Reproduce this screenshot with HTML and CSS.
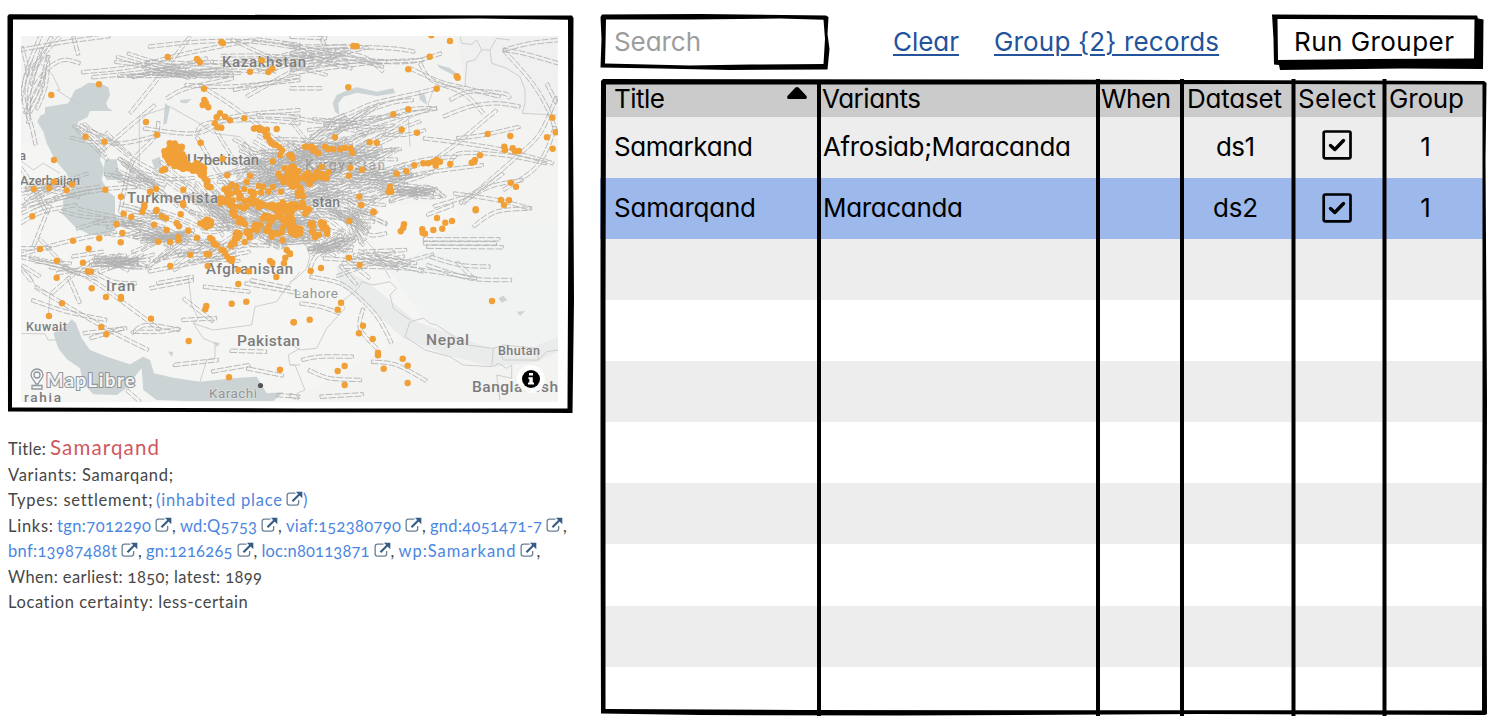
FILE: index.html
```html
<!DOCTYPE html>
<html lang="en">
<head>
<meta charset="utf-8">
<title>Grouper</title>
<link rel="stylesheet" href="styles.css">
</head>
<body>
<svg class="defs" width="0" height="0">
  <symbol id="ext" viewBox="0 0 18 17">
    <path d="M10 2.2H3.6Q1.2 2.2 1.2 4.6V12.6Q1.2 15 3.6 15H11Q13.4 15 13.4 12.6V9.5" fill="none" stroke="#6a8097" stroke-width="1.4"/>
    <path d="M6.8 10.8 14.5 3.2" stroke="#365c86" stroke-width="2.3"/>
    <path d="M10.5 .8H17.3V7.6Z" fill="#365c86"/>
  </symbol>
  <symbol id="check" viewBox="0 0 30 30">
    <path d="M3.5 1.5H27Q28.5 1.5 28.5 3V26.5Q28.5 28.3 27 28.3H3.5Q1.7 28.3 1.7 26.5V3Q1.7 1.5 3.5 1.5Z" fill="none" stroke="#000" stroke-width="2.7"/>
    <path d="M8.5 15.5 12.8 19.5 21.5 10.5" fill="none" stroke="#000" stroke-width="3.4" stroke-linecap="round" stroke-linejoin="round"/>
  </symbol>
</svg>
<main class="page">
  <section class="side">
    <div class="mapbox">
      <svg class="map" viewBox="21 36 537 366">
        <rect x="21" y="36" width="537" height="366" fill="#f3f3f2"/>
        <g id="land"></g>
        <g id="tracks"></g>
        <g class="places">
          <text x="222" y="67" textLength="84" font-size="15">Kazakhstan</text>
          <text x="187" y="165" textLength="72" font-size="15">Uzbekistan</text>
          <text x="127" y="203" textLength="91" font-size="15">Turkmenista</text>
          <text x="305" y="170" textLength="80" font-size="14" opacity=".5">Kyrgyzstan</text>
          <text x="312" y="207" textLength="28" font-size="14">stan</text>
          <text x="20" y="185" textLength="60" font-size="13">Azerbaijan</text>
          <text x="19" y="160" font-size="13">a</text>
          <text x="206" y="274" textLength="87" font-size="15">Afghanistan</text>
          <text x="106" y="291" textLength="29" font-size="15">Iran</text>
          <text x="294" y="298" textLength="44" font-size="13.500" class="city">Lahore</text>
          <text x="26" y="331" textLength="41" font-size="12.500">Kuwait</text>
          <text x="237" y="346" textLength="63" font-size="15.500">Pakistan</text>
          <text x="426" y="345" textLength="43" font-size="15.500">Nepal</text>
          <text x="498" y="355" textLength="42" font-size="12.500">Bhutan</text>
          <text x="472" y="392" textLength="86" font-size="15.500">Bangladesh</text>
          <text x="209" y="398" textLength="48" font-size="13.500" class="city">Karachi</text>
          <text x="24" y="402" textLength="37" font-size="13.500">rahia</text>
        </g>
        <g id="dots" fill="#f0a037"></g>
        <circle cx="260.500" cy="385.500" r="2.600" fill="#555"/>
        <g fill="#f6f6f6" stroke="#8f979c" stroke-width="1.300">
          <path d="M37 369a6 6 0 0 1 6 6c0 3-3 5-5 9h-2c-2-4-5-6-5-9a6 6 0 0 1 6-6Z"/>
          <circle cx="37" cy="375" r="3"/>
          <path d="M32 385.500h10v3.500h-10Z"/>
        </g>
        <text class="logo" x="46" y="387" textLength="89">MapLibre</text>
        <circle cx="531" cy="379" r="14" fill="#fff" opacity=".93"/>
        <circle cx="531" cy="379" r="9" fill="#000"/>
        <path d="M529 373h4v2.600h-4ZM528.400 377.200h4.400v5.400h1.200v1.800h-6v-1.800h1.300v-3.500h-.9Z" fill="#fff"/>
      </svg>
      <svg class="frame" viewBox="0 0 574 414">
        <path fill-rule="evenodd" d="M9 14.200 300 15 572 15.500 573.500 18 573 120 574 300 572.500 413 400 412.500 200 412 8 411.500 7.500 200 7.500 16ZM13 19.500 12.500 200 12 407.500 300 408.500 567.500 408.500 568.500 200 568 19.800 480 18.500 300 19.800Z"/>
      </svg>
    </div>
    <div class="info">
      <p><span data-w="38">Title:</span><strong data-w="109">Samarqand</strong></p>
      <p><span data-w="165">Variants: Samarqand;</span></p>
      <p><span data-w="144">Types: settlement;</span><a data-w="126">(inhabited place</a><svg class="ext"><use href="#ext"/></svg><a class="close">)</a></p>
      <p><span data-w="45">Links:</span><a data-w="94">tgn:7012290</a><svg class="ext"><use href="#ext"/></svg><i>,</i><a data-w="77">wd:Q5753</a><svg class="ext"><use href="#ext"/></svg><i>,</i><a data-w="115">viaf:152380790</a><svg class="ext"><use href="#ext"/></svg><i>,</i><a data-w="112">gnd:4051471-7</a><svg class="ext"><use href="#ext"/></svg><i>,</i></p>
      <p><a class="first" data-w="109">bnf:13987488t</a><svg class="ext"><use href="#ext"/></svg><i>,</i><a data-w="86.500">gn:1216265</a><svg class="ext"><use href="#ext"/></svg><i>,</i><a data-w="108">loc:n80113871</a><svg class="ext"><use href="#ext"/></svg><i>,</i><a data-w="117">wp:Samarkand</a><svg class="ext"><use href="#ext"/></svg><i>,</i></p>
      <p><span data-w="254">When: earliest: 1850; latest: 1899</span></p>
      <p><span data-w="240">Location certainty: less-certain</span></p>
    </div>
  </section>
  <section class="work">
    <div class="tools">
      <div class="search">
        <svg class="frame" viewBox="0 0 229 56"><path fill-rule="evenodd" d="M2 .5 100 0 226 1.500 228.500 3 227.500 20 229.500 35 227.500 55.500 130 56 60 54.500 .5 53.500 1.500 25 .5 3ZM6 5.500 5.500 30 5 49.500 90 51.500 150 50.500 223.500 50 225 25 223.500 5.800 180 4.500 90 5.500Z"/></svg>
        <span data-w="87">Search</span>
      </div>
      <a class="link clear" data-w="66">Clear</a>
      <a class="link group" data-w="225">Group {2} records</a>
      <div class="run">
        <svg class="frame" viewBox="0 0 212 56"><path fill-rule="evenodd" d="M0 .5 205 1.500 206 4.500 211.500 5.500 211 55 130 54.500 8 56 7 51 2 50.500 1.500 25ZM5.500 5 6 46 100 45 202 44.500 202.500 5.500Z"/></svg>
        <span data-w="160">Run Grouper</span>
      </div>
    </div>
    <div class="grid">
      <div class="row head">
        <div><span data-w="51">Title</span><svg class="sort" viewBox="0 0 20 12"><path d="M10 0Q11 0 12 1L19.500 9Q20.500 12 18 12H2Q-.5 12 .5 9L8 1Q9 0 10 0Z"/></svg></div>
        <div><span data-w="99">Variants</span></div><div><span data-w="70">When</span></div><div><span data-w="95">Dataset</span></div><div><span data-w="78">Select</span></div><div><span data-w="75">Group</span></div>
      </div>
      <div class="row odd">
        <div><span data-w="139">Samarkand</span></div><div><span data-w="248">Afrosiab;Maracanda</span></div><div></div><div class="mid"><span data-w="39">ds1</span></div><div class="mid"><svg class="check"><use href="#check"/></svg></div><div class="mid one"><span>1</span></div>
      </div>
      <div class="row picked">
        <div><span data-w="142">Samarqand</span></div><div><span data-w="140">Maracanda</span></div><div></div><div class="mid"><span data-w="45">ds2</span></div><div class="mid"><svg class="check low"><use href="#check"/></svg></div><div class="mid one"><span>1</span></div>
      </div>
      <div class="row odd"></div>
      <div class="row"></div>
      <div class="row odd"></div>
      <div class="row"></div>
      <div class="row odd"></div>
      <div class="row"></div>
      <div class="row odd"></div>
      <div class="row last"></div>
      <svg class="rules" viewBox="600 79 888 637">
        <path fill-rule="evenodd" d="M603 79 1000 79.500 1484 81 1486.500 83 1485.500 160 1487 400 1486.500 580 1487 714 1485 715 1200 714 900 715.500 700 715 601 713.500 600.500 500 600.500 250 601 81ZM606 84.500 605.500 300 605.500 709 800 710 1482 710.500 1482.500 400 1482.500 84.500 1250 84 1000 84.500Z"/>
        <path d="M819 80V716M1098 79V716M1182 79V716M1293.500 79V716M1384.500 79V716" stroke="#000" stroke-width="4"/>
      </svg>
    </div>
  </section>
</main>
<script src="app.js"></script>
</body>
</html>
```
FILE: styles.css
```css
* { box-sizing: border-box; }
body { margin: 0; background: #fff; color: #000; font-family: Lato, "Open Sans", sans-serif; overflow: hidden; }
.defs { position: absolute; }
.page { display: flex; width: 1504px; height: 724px; }
.side { width: 600px; flex: none; }
.mapbox { position: relative; height: 414px; padding: 36px 0 0 21px; }
.map { display: block; width: 537px; height: 366px; }
.frame { position: absolute; left: 0; top: 0; width: 100%; height: 100%; overflow: visible; }
.mapbox .frame { width: 574px; height: 414px; }
.places text { fill: #7c7c7c; font-family: "Roboto", sans-serif; font-weight: 500; paint-order: stroke; stroke: rgba(245,245,245,.45); stroke-width: 1.5px; }
.places .city { fill: #959595; font-weight: 400; }
.logo { font: 700 18.5px Lato, sans-serif; fill: #f4f4f4; stroke: #8f979c; stroke-width: 2.2px; paint-order: stroke; }
.info { padding: 20px 0 0 8px; color: #464646; font-size: 16.5px; font-variant-numeric: oldstyle-nums; }
.info p { display: flex; align-items: baseline; height: 25.6px; line-height: 27px; margin: 0; white-space: nowrap; }
.info p:first-child { height: 27.5px; line-height: 26px; }
.info strong { font-weight: 400; font-size: 20.5px; color: #cf5860; margin-left: 4px; }
.info a { color: #4b86e0; margin-left: 4px; }
.info a.first, .info a.close { margin-left: 0; }
.info i { font-style: normal; width: 4px; }
.ext { width: 17px; height: 16px; margin-left: 4px; flex: none; align-self: flex-start; margin-top: 4px; }
.work { width: 904px; padding-top: 14px; font-family: Inter, Lato, sans-serif; font-feature-settings: "cv11"; font-size: 26px; }
.tools { display: flex; height: 65px; line-height: 55px; white-space: nowrap; }
.search { position: relative; width: 229px; height: 56px; padding-left: 14px; color: #9d9d9d; }
.link { color: #22539b; text-decoration: underline; text-decoration-thickness: 2px; text-underline-offset: 3px; }
.clear { margin-left: 64px; }
.group { margin-left: 35px; }
.run { position: relative; width: 212px; height: 56px; margin-left: 53px; padding-left: 22px; }
.search span, .run span { position: relative; }
.grid { position: relative; width: 888px; height: 637px; padding-top: 3px; }
.row { display: grid; grid-template-columns: 216px 279px 84px 111px 91px 99px; height: 61.1px; margin-left: 3px; width: 880px; }
.row > div { padding-left: 4px; line-height: 59px; white-space: nowrap; min-width: 0; }
.row > div:first-child { padding-left: 11px; }
.row.head { background: #cbcbcb; height: 34.8px; }
.head > div { line-height: 33px; padding-left: 3px; display: flex; }
.head > div:nth-child(4), .head > div:nth-child(5), .head > div:nth-child(6) { padding-left: 5px; }
.odd { background: #ededed; }
.picked { background: #9db9ec; margin-left: 0; width: 883px; grid-template-columns: 219px 279px 84px 111px 91px 99px; }
.picked > div:first-child { padding-left: 14px; }
.row > .mid { padding: 0 4px 0 0; display: flex; justify-content: center; }
.row > .mid.one { padding-right: 16px; }
.last { height: 43px; }
.sort { width: 20px; height: 12px; margin: 5px 0 0 122px; }
.check { width: 30px; height: 30px; margin-top: 13px; }
.check.low { margin-top: 15px; }
.rules { position: absolute; left: 0; top: 0; width: 888px; height: 637px; }
```
FILE: app.js
```js
// Spread each label over its design width.
document.querySelectorAll('[data-w]').forEach(el => {
  const w = +el.dataset.w;
  el.style.display = 'inline-block';
  const natural = el.getBoundingClientRect().width;
  el.style.letterSpacing = (w - natural) / (el.textContent.length - 1) + 'px';
  el.style.width = w + 'px';
  el.style.flex = 'none';
  el.style.whiteSpace = 'nowrap';
});

let seed = 7;
const rnd = () => { seed = (seed * 16807) % 2147483647; return seed / 2147483647; };
const NS = 'http://www.w3.org/2000/svg';
function add(parent, tag, attrs) {
  const n = document.createElementNS(NS, tag);
  for (const k in attrs) n.setAttribute(k, attrs[k]);
  document.getElementById(parent).appendChild(n);
}
// Map tiles: origin of each quarter; tile units are a third of a pixel.
const tile = { a: [0, 0], b: [290, 0], c: [0, 205], d: [290, 205] };
const read = (t, s) => s.trim().split(/\s+/).map(p => {
  const [x, y] = p.split(',').map(Number);
  return [tile[t][0] + x / 3, tile[t][1] + y / 3];
});
const path = pts => 'M' + pts.map(p => p[0].toFixed(1) + ' ' + p[1].toFixed(1)).join('L');

// Catmull-Rom resampling
function smooth(pts) {
  if (pts.length < 3) return pts;
  const out = [];
  for (let i = 0; i < pts.length - 1; i++) {
    const p = [pts[Math.max(0, i - 1)], pts[i], pts[i + 1], pts[Math.min(pts.length - 1, i + 2)]];
    for (let k = 0; k < 6; k++) {
      const t = k / 6;
      out.push([0, 1].map(v => .5 * (2 * p[1][v] + (p[2][v] - p[0][v]) * t + (2 * p[0][v] - 5 * p[1][v] + 4 * p[2][v] - p[3][v]) * t * t + (3 * p[1][v] - p[0][v] - 3 * p[2][v] + p[3][v]) * t * t * t)));
    }
  }
  out.push(pts[pts.length - 1]);
  return out;
}

// Pale relief
[['a','60,430 260,440 500,500 900,560 900,640 60,640','#f5f5f3'],['c','60,0 900,0 900,590 60,590','#f5f5f3'],['d','0,0 500,0 520,300 0,590','#f5f5f3'],
 ['d','500,60 805,60 805,420 600,430 400,340 300,200','#f1f2f2'],['b','500,110 800,110 805,330 700,340 530,280','#f0f0f0'],
 ['d','140,180 230,230 380,350 600,430 720,430 805,395 805,440 740,470 610,485 470,450 340,400 240,310 150,240','#eaebeb']
].forEach(([t, s, f]) => add('land', 'path', { d: path(read(t, s)) + 'Z', fill: f }));

// Seas and lakes
[['a','112,365 120,348 135,340 135,322 205,310 215,290 225,270 245,262 265,248 300,250 325,262 330,285 318,310 325,325 340,333 270,333 262,352 235,365 230,385 245,405 262,430 290,440 305,460 300,480 312,505 305,540 325,575 345,590 345,640 355,680 320,705 270,705 225,680 185,640 190,600 215,570 200,520 165,480 140,430 130,395'],
 ['a','315,478 350,478 355,510 372,525 360,540 320,540 310,520'],['a','495,310 510,320 500,370 490,375'],['a','540,300 575,297 560,310 542,308'],['a','455,480 480,470 485,500 465,510'],
 ['b','128,310 140,285 175,270 200,262 260,275 310,265 315,280 260,288 200,278 160,290 145,310 148,345 135,335'],['b','385,275 405,285 412,315 390,300'],['b','440,193 480,205 510,228 490,225 450,205'],['b','235,460 270,450 260,475 235,475'],
 ['c','160,385 200,360 215,343 228,355 245,400 270,435 320,455 390,478 430,455 450,465 462,505 520,518 600,530 700,520 770,515 785,540 800,565 850,562 820,588 560,588 470,585 430,555 425,490 400,520 385,545 350,570 280,568 250,535 240,490 200,462 175,430'],
 ['c','505,440 520,440 515,455'],['d','625,280 640,272 652,285 635,293'],['d','680,320 705,318 690,332'],['c','640,410 660,415 650,425']
].forEach(([t, s]) => add('land', 'path', { d: path(read(t, s)) + 'Z', fill: '#cbd3d5' }));

// Borders
[['a','120,190 155,220 180,270 170,270 205,293 240,310'],['a','418,500 418,350 510,320 590,365 640,400 720,410 750,440 750,480'],['a','60,480 100,510 130,490 180,520'],
 ['b','510,110 515,130 545,133 560,120 575,150 600,150 605,190 650,205 690,230 705,270 705,310 697,340 800,345'],['b','575,150 555,180 530,185 525,260 440,260 430,270 415,310 420,330 355,355 360,440'],['b','600,150 620,115 660,120'],
 ['c','60,190 90,210 110,250 150,265 145,330'],['c','60,385 135,387 145,405 170,405'],['c','565,215 575,300 595,340 580,355 640,375 755,360 765,305 830,290 850,260 900,200'],['c','580,355 610,400 645,415 645,460 620,465 600,530'],['c','900,430 865,450 870,480 900,480'],
 ['d','0,230 20,220 50,190 60,155 45,110'],['d','0,480 15,480 45,555 20,565'],['d','0,415 30,435 80,430 110,370 165,310 155,290 205,250 215,230 250,240 300,230 320,250 300,270 310,310 360,345'],['d','345,395 360,350 400,340 420,355 440,360 530,420 610,430 605,485 520,480 480,455 405,435 345,395'],['d','610,430 640,420 740,430 745,465 640,465 630,440'],['d','745,465 770,440 805,435'],['d','610,485 625,475 650,490 665,480 665,520 620,510 630,585'],['d','150,190 200,80 250,130 300,220']
].forEach(([t, s]) => add('land', 'path', { d: path(read(t, s)), fill: 'none', stroke: '#c9c9c9', 'stroke-width': .9 }));

// A track is a dashed capsule around a polyline.
function track(raw, op = .9, half = 1.7) {
  const pts = smooth(raw);
  const side = s => pts.map((p, i) => {
    const a = pts[Math.max(0, i - 1)], b = pts[Math.min(pts.length - 1, i + 1)];
    const dx = b[0] - a[0], dy = b[1] - a[1], l = Math.hypot(dx, dy) || 1;
    return [p[0] - s * half * dy / l, p[1] + s * half * dx / l];
  });
  add('tracks', 'path', { d: path(side(1).concat(side(-1).reverse())) + 'Z', fill: 'none', stroke: '#b2b2b2', 'stroke-width': 1, 'stroke-linejoin': 'round', 'stroke-dasharray': '7 1.6', opacity: op });
}
[['a','60,150 200,125 330,108'],['a','125,100 85,200 70,290 95,380 107,435'],['a','180,110 120,180 90,260 85,370'],['a','220,110 235,165'],['a','240,190 190,180 140,210 95,280 85,340'],['a','155,110 100,210'],
 ['a','245,217 400,200 560,160 760,120'],['a','275,232 440,215 640,185'],['a','570,110 470,240 390,340'],['a','465,315 400,370 300,455'],['a','475,365 465,410 400,480 375,560 360,640'],['a','445,140 600,125 760,125 900,145'],['a','765,118 900,135'],
 ['a','500,295 560,265 700,235'],['a','555,255 690,260 900,240'],['a','700,270 900,230'],['a','740,290 900,200'],['a','600,255 700,320 780,380 850,440'],['a','240,375 330,425 420,490 560,560'],['a','250,370 340,430 480,405'],['a','430,385 590,400 700,350 900,330'],['a','590,400 620,370 760,360 900,370'],['a','770,345 900,350'],
 ['a','590,410 650,510 700,560'],['a','60,620 300,570 420,560'],['a','65,640 200,580 300,560'],['a','60,500 100,560 140,640'],
 ['b','0,140 150,140 300,145 375,155'],['b','0,160 130,170 230,180 290,185'],['b','0,200 200,185 360,185 455,160'],['b','0,220 230,190 400,180'],['b','95,115 125,195'],['b','180,160 230,175 280,215'],['b','0,265 95,265'],['b','390,190 425,240 520,280 580,340'],['b','360,205 450,245 530,265 630,290'],['b','480,300 540,275 640,280 660,295'],['b','460,350 540,320 620,310 690,320'],['b','440,325 330,350 200,390'],['b','640,150 720,130 805,120'],['b','640,150 700,160 805,190'],['b','640,150 720,240 770,320 800,400'],['b','770,250 800,310'],['b','800,290 750,400 680,470 600,540 520,610'],['b','620,330 500,430 420,490'],['b','500,415 580,405 690,380'],['b','400,415 520,430 640,450 790,490'],['b','480,490 510,460 640,465 770,490'],['b','795,380 770,450 730,510 640,570'],['b','430,620 550,580 640,520'],['b','510,610 600,560 700,540'],['b','490,580 620,600 720,625'],['b','0,350 100,365 180,340 250,310 380,280 440,265'],['b','130,410 200,350 300,310 370,300'],['b','60,410 220,370 350,330 440,325'],['b','300,540 430,515 580,495'],['b','250,520 400,480 500,470'],['b','300,600 400,560 460,590'],['b','210,580 360,540 430,515'],['b','0,110 110,115'],['b','170,560 300,560 430,580'],
 ['c','100,125 150,0'],['c','60,55 130,20 230,0'],['c','60,150 200,110 350,80'],['c','60,130 155,130'],['c','60,155 240,205 380,300 480,375'],['c','105,245 230,320 345,385 445,435'],['c','95,285 200,320 320,345'],['c','95,230 60,180 120,215'],['c','155,265 230,200 280,165'],['c','170,205 260,195 340,230 410,235'],['c','240,295 205,215'],['c','215,155 310,140'],['c','250,385 380,370'],['c','270,400 370,370'],['c','400,380 480,380 540,370'],['c','450,250 580,225'],['c','470,235 580,215'],['c','490,160 600,135'],['c','445,200 600,170 750,140'],['c','610,245 750,260'],['c','550,280 640,350'],['c','545,345 650,340'],['c','735,235 900,265'],['c','750,225 870,250'],['c','690,437 800,440'],['c','520,480 655,465'],['c','635,500 750,480'],['c','740,490 850,512'],['c','400,95 600,100'],['c','290,165 450,165'],['c','395,385 440,360 540,375'],['c','830,570 900,575'],['c','380,555 420,590'],
 ['d','60,215 150,235 210,280 265,340 305,415'],['d','30,295 90,305 150,325'],['d','220,310 210,370 260,430'],['d','35,465 90,455 190,455'],['d','55,495 120,520 215,525'],['d','90,575 220,568'],['d','0,570 25,580'],['d','245,470 320,480 410,528'],['d','400,103 630,103'],['d','410,125 640,127'],['d','400,115 620,115'],['d','420,155 510,180 600,185'],['d','410,180 540,220 665,225'],['d','160,185 350,190 560,220'],['d','100,160 290,175 400,200'],['d','190,150 380,175'],['d','220,140 350,135'],['d','500,170 550,220'],['d','550,65 620,20 725,10'],['d','410,30 490,0'],['d','60,190 90,145 190,125'],['d','150,180 200,240'],['d','170,165 240,220'],['d','200,60 240,90 290,85']
].forEach(([t, s]) => track(read(t, s)));

// Track bundles: centre x, y, spread x, spread y, count, heading, length
[[190,70,65,11,14,-.12,80],[290,58,60,9,12,.05,85],[35,90,12,35,6,1.7,50],
 [285,180,60,35,85,-.3,42],[275,225,70,28,75,.25,38],[330,155,50,22,42,-.25,55],[220,205,55,25,38,.5,40],
 [370,185,50,18,24,-.15,55],[360,125,50,16,14,-.3,60],[130,225,55,22,18,.1,45],[115,261,24,6,18,-.1,35],[165,238,30,6,15,.1,45],
 [150,180,40,20,16,.5,45],[330,245,20,8,18,-.3,30],[370,262,50,10,6,.1,55],[50,190,30,10,9,-.2,50],[60,270,35,20,5,.5,40],[100,140,20,6,6,.4,40],[210,250,60,14,18,-.3,45],[350,215,30,15,16,.5,36],[270,160,55,20,18,.7,40],[410,192,35,6,14,.1,28],[355,225,12,15,8,.9,22]
].forEach(([x, y, sx, sy, n, h, len]) => {
  for (let i = 0; i < n; i++) {
    const cx = x + (rnd() + rnd() - 1) * sx, cy = y + (rnd() + rnd() - 1) * sy;
    const a = h + (rnd() - .5) * .8, l = len * (.6 + rnd() * .7) / 2, b = (rnd() - .5) * 8;
    const dx = Math.cos(a) * l, dy = Math.sin(a) * l;
    track([[cx - dx, cy - dy], [cx + b * Math.sin(a), cy + b], [cx + dx, cy + dy]], .85, 1.5);
  }
});

// Find spots
const dot = (x, y) => add('dots', 'circle', { cx: x.toFixed(1), cy: y.toFixed(1), r: 3.2 });
[['a','154,285 297,253 503,171 591,177 600,187 664,126 669,130 785,181 750,215 805,216 817,206 612,266 613,300 608,315 625,322 618,310 660,340 650,352 675,350 690,361 645,370 652,382 664,383 733,355 830,387 438,366 471,404 602,428 257,410 313,425 162,480 101,567 148,564 162,545 200,571 216,553 316,569 363,590 433,615 450,575 468,566 550,569 549,610 470,630 668,476 682,526 818,484 840,465 868,466 876,472 509,430 545,440 750,527 740,545'],
 ['b','424,106 480,123 419,170 355,208 190,138 200,139 500,229 503,233 440,266 175,262 310,343 355,328 335,389 381,398 135,412 239,427 260,428 593,402 661,408 787,353 797,397 771,412 788,446 643,440 645,450 668,445 675,454 687,453 570,466 555,480 545,488 552,485 481,492 373,496 400,490 415,490 430,485 440,480 450,485 437,497 320,521 349,514 300,560 295,575 304,575 181,503 216,509 177,527 95,500 208,590 214,614 557,628 662,548 678,560 633,600 657,601 250,635 45,440 55,440 65,440 75,446 70,452 85,460 105,440 115,447 130,448 150,448 165,443 182,445 187,458'],
 ['c','97,34 219,107 298,100 120,132 171,167 266,131 249,173 263,199 273,200 170,218 275,250 186,295 147,333 318,276 363,276 363,281 304,366 319,388 453,341 566,408 362,112 367,84 350,58 371,26 394,36 427,20 433,5 468,18 485,34 498,40 462,59 542,28 530,55 537,64 500,75 474,110 510,111 535,97 536,106 565,77 591,98 571,149 511,183 620,148 628,148 623,183 715,195 747,199 715,237 695,296 739,290 619,303 616,313 881,352 687,517 840,494 829,216 810,168 817,174 860,135 869,145 856,158 852,175 550,0'],
 ['d','178,48 342,58 340,68 332,79 397,73 398,83 405,86 430,75 457,71 466,53 486,48 441,39 557,16 642,0 177,158 209,180 62,198 93,189 153,293 143,314 59,344 11,352 219,362 207,385 248,402 264,443 264,451 338,461 353,482 281,491 164,483 143,498 164,540 353,534 606,288 214,0 251,22 0,147']
].forEach(([t, s]) => read(t, s).forEach(p => dot(...p)));

// Dense streaks: tile, line, count, scatter
[['a','505,440 540,440',8,10],['a','490,465 540,460 510,480 570,475',26,12],['a','495,495 550,490 590,500 600,520',42,18],['a','600,520 620,545 630,568',9,5],['a','760,380 790,390 820,425 845,462',16,7],
 ['a','670,600 690,565 760,575 850,570',22,16],['a','655,605 740,605 830,610',22,18],['a','845,530 880,510 880,530',16,18],['a','885,540 895,580',7,12],['a','850,610 890,610',6,12],
 ['b','50,540 70,520 130,535',24,16],['b','15,550 35,575 30,600 55,620',18,13],['b','0,470 5,530 0,570',9,8],
 ['c','605,65 625,45 630,60',13,8],['c','685,0 715,40 725,50',12,12],['c','740,0 830,15 870,15',15,16],['c','800,45 830,20 870,40 860,80',34,20],['c','740,100 760,70 810,80 840,110',22,17],['c','635,100 650,125 680,155 700,165',12,7],['c','695,130 710,100 715,80',12,7],['c','860,70 900,80',10,14],
 ['d','0,75 30,85',8,13],['d','60,55 95,50 110,80 60,90',18,12],['d','0,0 20,10 60,25',11,10],['d','0,30 10,50',4,8]
].forEach(([t, s, n, j]) => {
  const pts = read(t, s);
  for (let i = 0; i < n; i++) {
    const u = i / n * (pts.length - 1), k = Math.floor(u), f = u - k;
    const q = v => pts[k][v] + (pts[k + 1][v] - pts[k][v]) * f + (rnd() - .5) * j * .67;
    dot(q(0), q(1));
  }
});
```
